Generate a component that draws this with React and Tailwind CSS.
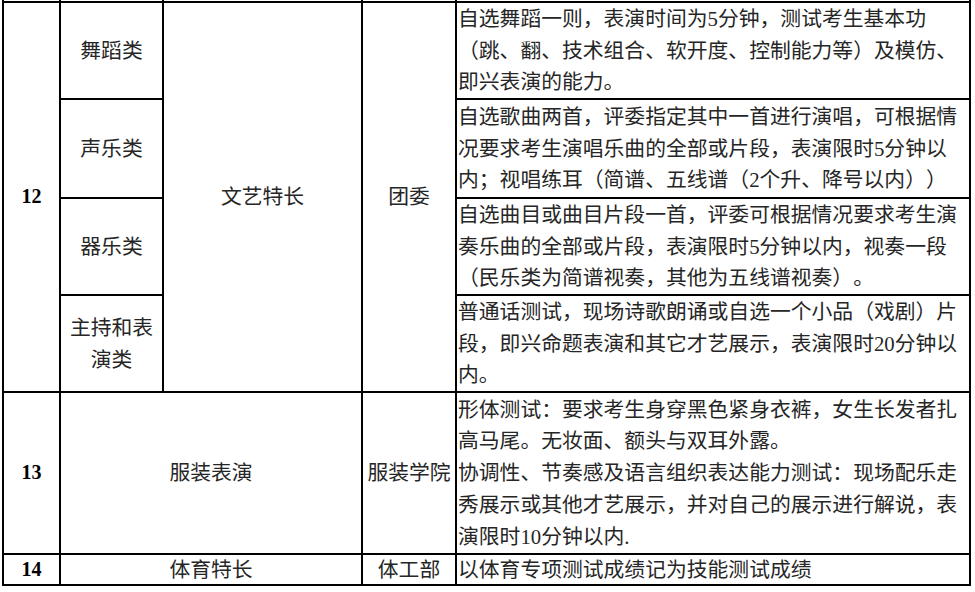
import React from "react";

const font = "font-['Liberation_Serif','Noto_Sans_CJK_SC',serif]";

const rows12 = [
  {
    name: ["舞蹈类"],
    desc: [
      "自选舞蹈一则，表演时间为5分钟，测试考生基本功",
      "（跳、翻、技术组合、软开度、控制能力等）及模仿、",
      "即兴表演的能力。",
    ],
  },
  {
    name: ["声乐类"],
    desc: [
      "自选歌曲两首，评委指定其中一首进行演唱，可根据情",
      "况要求考生演唱乐曲的全部或片段，表演限时5分钟以",
      "内；视唱练耳（简谱、五线谱（2个升、降号以内））",
    ],
  },
  {
    name: ["器乐类"],
    desc: [
      "自选曲目或曲目片段一首，评委可根据情况要求考生演",
      "奏乐曲的全部或片段，表演限时5分钟以内，视奏一段",
      "（民乐类为简谱视奏，其他为五线谱视奏）。",
    ],
  },
  {
    name: ["主持和表", "演类"],
    desc: [
      "普通话测试，现场诗歌朗诵或自选一个小品（戏剧）片",
      "段，即兴命题表演和其它才艺展示，表演限时20分钟以",
      "内。",
    ],
  },
];

const desc13 = [
  "形体测试：要求考生身穿黑色紧身衣裤，女生长发者扎",
  "高马尾。无妆面、额头与双耳外露。",
  "协调性、节奏感及语言组织表达能力测试：现场配乐走",
  "秀展示或其他才艺展示，并对自己的展示进行解说，表",
  "演限时10分钟以内.",
];

const Center = ({ className = "", children }) => (
  <div
    className={`bg-white flex flex-col items-center justify-center text-center ${className}`}
  >
    {children}
  </div>
);

const Desc = ({ className = "", lines }) => (
  <div className={`bg-white flex flex-col justify-center pl-[1px] ${className}`}>
    {lines.map((l, i) => (
      <div key={i} className="whitespace-nowrap">
        {l}
      </div>
    ))}
  </div>
);

const Num = ({ className = "", children }) => (
  <Center className={`font-['Liberation_Serif',serif] font-bold text-[20px] text-black ${className}`}>
    {children}
  </Center>
);

const rowStart = ["row-start-2", "row-start-3", "row-start-4", "row-start-5"];

export default function App() {
  return (
    <div
      className={`w-[975px] h-[592px] bg-white ${font} text-[20.8px] leading-[31.7px] text-[#262626] [text-spacing-trim:space-all]`}
    >
      {/* table: black background shows through the gaps as the cell borders */}
      <div className="ml-[2px] w-[969px] bg-black px-[2px] pb-[2px] grid gap-[2px] grid-cols-[55px_101px_197px_92px_512px] grid-rows-[1px_95px_97px_95px_95px_160px_29px]">
        {/* bottom edge of the row above, cut off */}
        <div className="bg-white" />
        <div className="bg-white" />
        <div className="bg-white" />
        <div className="bg-white" />
        <div className="bg-white" />

        {/* 12 */}
        <Num className="col-start-1 row-start-2 row-span-4">12</Num>
        {rows12.map((r, i) => (
          <React.Fragment key={i}>
            <Center className={`col-start-2 ${rowStart[i]}`}>
              {r.name.map((n) => (
                <div key={n}>{n}</div>
              ))}
            </Center>
            <Desc className={`col-start-5 ${rowStart[i]}`} lines={r.desc} />
          </React.Fragment>
        ))}
        <Center className="col-start-3 row-start-2 row-span-4">文艺特长</Center>
        <Center className="col-start-4 row-start-2 row-span-4">团委</Center>

        {/* 13 */}
        <Num className="col-start-1 row-start-6">13</Num>
        <Center className="col-start-2 col-span-2 row-start-6">服装表演</Center>
        <Center className="col-start-4 row-start-6">服装学院</Center>
        <Desc className="col-start-5 row-start-6" lines={desc13} />

        {/* 14 */}
        <Num className="col-start-1 row-start-7">14</Num>
        <Center className="col-start-2 col-span-2 row-start-7">体育特长</Center>
        <Center className="col-start-4 row-start-7">体工部</Center>
        <Desc className="col-start-5 row-start-7" lines={["以体育专项测试成绩记为技能测试成绩"]} />
      </div>
    </div>
  );
}
